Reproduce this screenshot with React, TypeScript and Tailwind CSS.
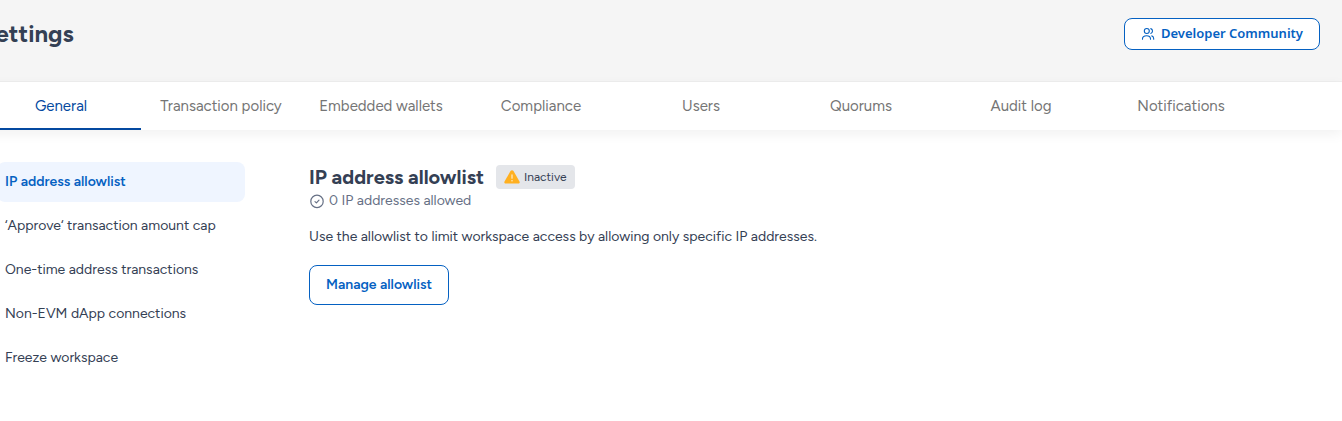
import React, { useState } from "react";
import clsx from "clsx";

const tabs = [
  "General",
  "Transaction policy",
  "Embedded wallets",
  "Compliance",
  "Users",
  "Quorums",
  "Audit log",
  "Notifications",
];

const sections = [
  "IP address allowlist",
  "‘Approve‘ transaction amount cap",
  "One-time address transactions",
  "Non-EVM dApp connections",
  "Freeze workspace",
];

const UsersIcon: React.FC = () => (
  <svg
    width="14"
    height="14"
    viewBox="0 0 14 14"
    fill="none"
    stroke="currentColor"
    strokeWidth="1.1"
    strokeLinecap="round"
    aria-hidden="true"
  >
    <circle cx="5.8" cy="4" r="2.5" />
    <path d="M1.5 12.2V11.8C1.5 9.9 3.2 8.7 5.6 8.7S9.5 9.9 9.5 11.8V12.2" />
    <path d="M9.8 1.6C10.9 1.9 11.5 2.8 11.5 4S10.9 6 9.8 6.4" />
    <path d="M10.8 8.9C12.1 9.3 12.7 10.3 12.7 11.8V12.2" />
  </svg>
);

const CheckIcon: React.FC = () => (
  <svg
    width="16"
    height="16"
    viewBox="0 0 16 16"
    fill="none"
    stroke="currentColor"
    strokeWidth="1.2"
    strokeLinecap="round"
    strokeLinejoin="round"
    aria-hidden="true"
  >
    <circle cx="8" cy="8.4" r="6.2" />
    <path d="M6 8.6L7.4 9.9L10 7.2" />
  </svg>
);

const WarningIcon: React.FC = () => (
  <svg width="16" height="16" viewBox="0 0 16 16" aria-hidden="true">
    <path
      d="M6.5 2.1C7.2 1 8.8 1 9.5 2.1L15.5 12.4C16.1 13.5 15.4 14.6 14.2 14.6H1.8C.6 14.6-.1 13.5.5 12.4Z"
      fill="#ffb020"
    />
    <path d="M8 6V9.2" stroke="#ffe9c0" strokeWidth="1.3" strokeLinecap="round" />
    <circle cx="8" cy="11.7" r=".8" fill="#ffe9c0" />
  </svg>
);

export default function App() {
  const [activeTab, setActiveTab] = useState(tabs[0]);
  const [section, setSection] = useState(sections[0]);

  return (
    <div className="min-h-screen overflow-hidden bg-white font-['Figtree','Lato',sans-serif] text-[#344054]">
      <div className="-ml-[19px]">
        <header className="flex h-[82px] items-start justify-between border-b border-[#eeeeee] bg-[#f5f5f5] pt-[18px] pr-[22px]">
          <h1 className="text-2xl leading-8 font-bold">Settings</h1>
          <button className="flex h-8 items-center gap-1.5 rounded-lg border border-[#0561c2] bg-white px-4 font-['Noto_Sans',sans-serif] text-[13px] font-semibold text-[#0561c2]">
            <UsersIcon />
            Developer Community
          </button>
        </header>

        <nav className="flex h-12 bg-white shadow-[0_4px_12px_rgba(0,0,0,0.06)]">
          {tabs.map((tab) => (
            <button
              key={tab}
              onClick={() => setActiveTab(tab)}
              className={clsx(
                "w-40 border-b-2 pt-0.5 text-[15px] whitespace-nowrap",
                activeTab === tab
                  ? "border-[#0449a0] text-[#0449a0]"
                  : "border-transparent text-[#757575]"
              )}
            >
              {tab}
            </button>
          ))}
        </nav>

        <main className="flex gap-16 pt-8 pl-4">
          <aside className="flex w-[248px] shrink-0 flex-col gap-1">
            {sections.map((item) => (
              <button
                key={item}
                onClick={() => setSection(item)}
                className={clsx(
                  "h-10 rounded-lg px-2 text-left text-sm whitespace-nowrap",
                  section === item && "bg-[#eff5ff] font-semibold text-[#0561c2]"
                )}
              >
                {item}
              </button>
            ))}
          </aside>

          <section className="flex-1 text-sm">
            <div className="flex items-center gap-3 pt-[3px]">
              <h2 className="text-xl leading-6 font-bold">IP address allowlist</h2>
              <span className="flex h-6 items-center gap-1 rounded bg-[#e4e6ea] px-2 text-xs">
                <WarningIcon />
                Inactive
              </span>
            </div>
            <p className="flex items-center gap-1 leading-6 text-[#667085]">
              <CheckIcon />0 IP addresses allowed
            </p>
            <p className="mt-3 leading-6">
              Use the allowlist to limit workspace access by allowing only specific IP addresses.
            </p>
            <button className="mt-4 h-10 rounded-lg border border-[#0561c2] px-4 font-semibold text-[#0561c2]">
              Manage allowlist
            </button>
          </section>
        </main>
      </div>
    </div>
  );
}
